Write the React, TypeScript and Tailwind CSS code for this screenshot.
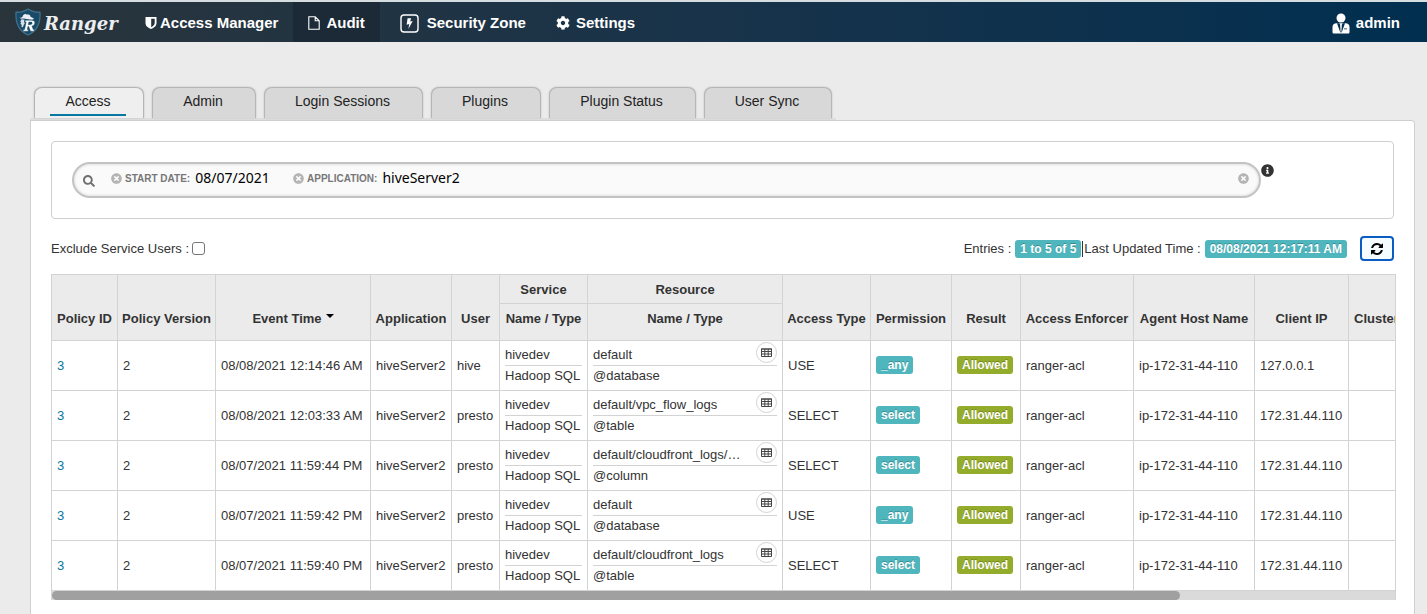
import { FaCog, FaInfoCircle, FaSearch, FaTimesCircle } from "react-icons/fa";

const tabs = [
  { label: "Access", width: "w-[110px]", active: true },
  { label: "Admin", width: "w-[104px]" },
  { label: "Login Sessions", width: "w-[159px]" },
  { label: "Plugins", width: "w-[110px]" },
  { label: "Plugin Status", width: "w-[147px]" },
  { label: "User Sync", width: "w-[128px]" },
];

const columnWidths = [66, 98, 155, 81, 48, 88, 195, 88, 81, 69, 113, 121, 94, 120];

const events = [
  { time: "08/08/2021 12:14:46 AM", user: "hive", resource: "default", type: "@database", access: "USE", permission: "_any", ip: "127.0.0.1" },
  { time: "08/08/2021 12:03:33 AM", user: "presto", resource: "default/vpc_flow_logs", type: "@table", access: "SELECT", permission: "select", ip: "172.31.44.110" },
  { time: "08/07/2021 11:59:44 PM", user: "presto", resource: "default/cloudfront_logs/…", type: "@column", access: "SELECT", permission: "select", ip: "172.31.44.110" },
  { time: "08/07/2021 11:59:42 PM", user: "presto", resource: "default", type: "@database", access: "USE", permission: "_any", ip: "172.31.44.110" },
  { time: "08/07/2021 11:59:40 PM", user: "presto", resource: "default/cloudfront_logs", type: "@table", access: "SELECT", permission: "select", ip: "172.31.44.110" },
];

function RangerMark() {
  return (
    <svg width="28" height="30" viewBox="0 0 28 30" aria-hidden="true">
      <path d="M14 2C10 4.800 6 5.400 2 5.200C1.400 15 4 23.500 14 28C24 23.500 26.600 15 26 5.200C22 5.400 18 4.800 14 2Z" fill="#194a68" stroke="#3f6f8c" strokeWidth="1.300" />
      <path d="M5.500 10.800c1.500.2 2.500-.3 3.200-1.300.3-1.600 1.300-2.700 2.800-2.600 1 .2 1.700.7 2.700.6 1.600.2 2.200 1.300 2.500 2.500 1.300.5 2.400.8 3.300 1.800-1 .8-2.700 1-4.200.7l-6.300-1c-1.500.3-2.900.2-4-.7z" fill="#e9eff3" />
      <path d="M7.500 12.300l3 .4-.5 2.300.9 1-1.100 2-1.100 2.500-1.400-1 .5-1.700-1.500-.7.900-1.700-.9-.8z" fill="#d5e0e7" />
      <path d="M11.300 13.300h6.200c2.600 0 3.700 1.300 3.200 3.100-.4 1.500-1.400 2.300-2.800 2.700l1.300 3.300h1.200l-.4 1.800h-3.500l-1.800-4.800h-.8l-.7 3h1.200l-.4 1.800H9.100l.4-1.800h1.100l1.600-7.300h-1.200zM14.800 15.100l-.6 2.600h1.800c1.200 0 2-.4 2.100-1.400.2-.8-.3-1.200-1.300-1.200z" fill="#fff" stroke="#194a68" strokeWidth=".4" />
    </svg>
  );
}

function ShieldIcon() {
  return (
    <svg width="12" height="14" viewBox="0 0 12 14" aria-hidden="true">
      <path d="M.5 1h11v6c0 3-2.500 4.800-5.500 6C3 11.800.5 10 .5 7z" fill="#fff" />
      <path d="M6.200 2.800h3.500V7c0 1.800-1.300 3-3.500 4.200z" fill="#22323d" />
    </svg>
  );
}

function FileIcon() {
  return (
    <svg width="12" height="14" viewBox="0 0 12 14" fill="none" stroke="#fff" strokeWidth="1.100" aria-hidden="true">
      <path d="M.8.8h6.400l4 4v8.400H.8zM7.200.8v4h4" />
    </svg>
  );
}

function BoltIcon() {
  return (
    <svg width="19" height="19" viewBox="0 0 19 19" aria-hidden="true">
      <rect x="1" y="1" width="17" height="17" rx="3" fill="none" stroke="#fff" strokeWidth="1.400" />
      <path d="M7.600 4.200h3.500L10.200 7.600l2.500-.6L8.400 15l.8-5-2.600.7z" fill="#fff" />
    </svg>
  );
}

function AdminIcon() {
  return (
    <svg width="18" height="21" viewBox="0 0 18 21" aria-hidden="true">
      <circle cx="9" cy="5" r="4.500" fill="#fff" />
      <path d="M4.500 10.200h9c2.500 0 4 1.500 4 4V19c0 1-.6 1.500-1.500 1.500H2C1 20.500.5 20 .5 19v-4.800c0-2.500 1.500-4 4-4z" fill="#fff" />
      <path d="M5 10.200 8.300 19.500h.4l-.5-6.500 0-1.300-.9-1.500zM13 10.200 9.700 19.500h-.4l.5-6.500 0-1.300.9-1.500zM12 15.500h3v.8h-3z" fill="#05304f" />
    </svg>
  );
}

function RefreshIcon() {
  return (
    <svg width="12" height="12" viewBox="0 0 1536 1536" fill="#000" aria-hidden="true">
      <path d="M1511 928q0 5-1 7-64 268-268 434.500T764 1536q-146 0-282.500-55T238 1324l-129 129q-19 19-45 19t-45-19-19-45V960q0-26 19-45t45-19h448q26 0 45 19t19 45-19 45l-137 137q71 66 161 102t187 36q134 0 250-65t186-179q11-17 53-117 8-23 30-23h192q13 0 22.500 9.500t9.500 22.500zm25-800v448q0 26-19 45t-45 19h-448q-26 0-45-19t-19-45 19-45l138-138Q969 256 768 256q-134 0-250 65T332 500q-11 17-53 117-8 23-30 23H50q-13 0-22.500-9.500T18 608v-7q65-268 270-434.500T768 0q146 0 284 55.500T1297 212l130-129q19-19 45-19t45 19 19 45z" />
    </svg>
  );
}

function GridIcon() {
  return (
    <svg width="11" height="9" viewBox="0 0 11 9" fill="none" stroke="#444" strokeWidth="1" aria-hidden="true">
      <path d="M.5 1h10v7.500H.5zM0 1h11M.5 3.500h10M.5 6h10M3.800 1v7.500M7.200 1v7.500" />
    </svg>
  );
}

const badge = "inline-block rounded-[3px] px-[5px] text-[12px] leading-[18px] font-bold text-white [text-shadow:0_-1px_0_rgba(0,0,0,0.25)]";
const head = "border-r border-b border-[#d3d3d3] px-1 pb-[11px] text-center align-bottom font-bold";
const groupHead = "border-r border-b border-[#d3d3d3] px-0 pt-0.5 pb-0";
const cell = "h-[50px] border-r border-b border-[#d3d3d3] px-[5px] align-middle";
const badgeCell = "h-[50px] border-r border-b border-[#d3d3d3] px-[5px] pb-0.5 align-middle";

export default function App() {
  return (
    <div className="flex min-h-screen flex-col bg-[#ebebeb] font-['Liberation_Sans',Arial,sans-serif] text-[13px] leading-5 text-[#333]">
      <header className="flex h-[42px] items-stretch border-t-2 border-[#d5dde1] bg-linear-to-r from-[#29343b] via-[#18334a] to-[#012f50] text-[15px] font-bold text-white">
        <a href="#home" className="flex w-[130px] items-center gap-0.5 pl-3.5 text-[#eceff1]">
          <RangerMark />
          <span className="pt-1 font-['DejaVu_Serif',serif] text-[18px] leading-6 italic">Ranger</span>
        </a>
        <nav className="flex items-stretch">
          <a href="#access-manager" className="flex items-center gap-[3px] px-[15px] pt-0.5"><ShieldIcon />Access Manager</a>
          <a href="#audit" className="flex items-center gap-1.5 bg-[#1b2a36] px-[15px] pt-0.5"><FileIcon />Audit</a>
          <a href="#security-zone" className="flex items-center gap-2 pr-[15px] pl-5 pt-0.5"><BoltIcon />Security Zone</a>
          <a href="#settings" className="flex items-center gap-1.5 px-[15px] pt-0.5"><FaCog size={14} />Settings</a>
        </nav>
        <a href="#profile" className="ml-auto flex items-center gap-1.5 pt-0.5 pr-[27px]"><AdminIcon />admin</a>
      </header>

      <main className="flex flex-1 flex-col pt-[45px] pr-3 pl-[30px]">
        <nav className="flex w-[806px] gap-2 border-b-2 border-[#dedede] pl-1">
          {tabs.map((tab) => (
            <a
              key={tab.label}
              href={"#" + tab.label}
              className={`flex h-[31px] justify-center rounded-t-lg border border-b-0 border-[#b5b5b5] pt-[3px] text-[14px] text-[#222] shadow-[0_0_2px_#bbb] ${tab.width} ${tab.active ? "bg-[#efefef]" : "bg-[#d8d8d8]"}`}
            >
              <span className={tab.active ? "mr-0.5 h-[25px] w-[76px] border-b-2 border-[#0878a4] text-center" : "pr-0.5"}>{tab.label}</span>
            </a>
          ))}
        </nav>

        <section className="flex-1 rounded-tr border border-b-0 border-[#cfcfcf] bg-white px-5 pt-5">
          <div className="flex items-start rounded-sm border border-[#cfcfcf] px-5 py-5">
            <div className="flex h-9 w-[1189px] items-center rounded-[18px] border-2 border-[#c3c3c3] bg-[#fafafa] pr-2.5 pl-[9px] shadow-[inset_0_0_3px_#ccc]">
              <FaSearch size={12} className="mt-0.5 shrink-0 text-[#707070]" />
              <div className="flex min-w-0 flex-1 items-center pb-1 pl-4">
                {[
                  { name: "START DATE:", value: "08/07/2021" },
                  { name: "APPLICATION:", value: "hiveServer2" },
                ].map((facet) => (
                  <div key={facet.name} className="flex min-w-[182px] items-center">
                    <button aria-label={"Remove " + facet.name} className="text-[#b4b4b4]"><FaTimesCircle size={11} /></button>
                    <span className="pt-px pl-[3px] text-[10px] font-bold text-[#777]">{facet.name}</span>
                    <span className="pl-[5px] font-['Noto_Sans',sans-serif] text-[14px] text-black">{facet.value}</span>
                  </div>
                ))}
                <input aria-label="Search access events" className="min-w-0 flex-1 bg-transparent outline-none" />
              </div>
              <button aria-label="Clear search" className="pb-1 text-[#b4b4b4]"><FaTimesCircle size={11} /></button>
            </div>
            <button aria-label="Search help" className="pt-0.5 text-[#333]"><FaInfoCircle size={13} /></button>
          </div>

          <div className="flex h-[55px] items-center justify-between pt-1">
            <label className="flex items-center gap-[3px]">
              Exclude Service Users :
              <input type="checkbox" className="size-[13px] appearance-none rounded-[3px] border border-[#767676] bg-white" />
            </label>
            <div className="flex items-center">
              <span className="pr-1">Entries :</span>
              <span className={badge + " bg-[#4fb6be]"}>1 to 5 of 5</span>
              <span className="ml-px border-l border-[#333] pr-1 pl-px leading-4">Last Updated Time :</span>
              <span className={badge + " bg-[#4fb6be]"}>08/08/2021 12:17:11 AM</span>
              <button aria-label="Refresh" className="ml-[13px] flex h-[25px] w-[34px] items-center justify-center rounded border-2 border-[#0b5cc0] bg-[#f5fcff]"><RefreshIcon /></button>
            </div>
          </div>

          <div className="-mr-0.5 overflow-hidden border border-b-0 border-[#d3d3d3]">
            <div className="overflow-hidden">
              <table className="w-[1417px] table-fixed border-separate border-spacing-0 whitespace-nowrap">
                <colgroup>
                  {columnWidths.map((width, i) => <col key={i} style={{ width }} />)}
                </colgroup>
                <thead className="bg-[#ebebeb]">
                  <tr className="h-[29px]">
                    <th rowSpan={2} className={head}>Policy ID</th>
                    <th rowSpan={2} className={head}>Policy Version</th>
                    <th rowSpan={2} className={head}>
                      <button className="font-bold">Event Time<svg width="8" height="10" viewBox="0 0 8 10" className="ml-1 inline-block align-baseline" aria-hidden="true"><path d="M0 1h8L4 5z" /></svg></button>
                    </th>
                    <th rowSpan={2} className={head}>Application</th>
                    <th rowSpan={2} className={head}>User</th>
                    <th className={groupHead}>Service</th>
                    <th className={groupHead}>Resource</th>
                    <th rowSpan={2} className={head}>Access Type</th>
                    <th rowSpan={2} className={head}>Permission</th>
                    <th rowSpan={2} className={head}>Result</th>
                    <th rowSpan={2} className={head}>Access Enforcer</th>
                    <th rowSpan={2} className={head}>Agent Host Name</th>
                    <th rowSpan={2} className={head}>Client IP</th>
                    <th rowSpan={2} className="border-r border-b border-[#d3d3d3] px-[5px] pb-[11px] text-left align-bottom font-bold">Cluster Name</th>
                  </tr>
                  <tr className="h-[37px]">
                    <th className={head}>Name / Type</th>
                    <th className={head}>Name / Type</th>
                  </tr>
                </thead>
                <tbody>
                  {events.map((event) => (
                    <tr key={event.time}>
                      <td className={cell}><a href="#policy" className="text-[#0878a4]">3</a></td>
                      <td className={cell}>2</td>
                      <td className={cell}>{event.time}</td>
                      <td className={cell}>hiveServer2</td>
                      <td className={cell}>{event.user}</td>
                      <td className={cell}>
                        <div className="border-b border-[#d3d3d3]">hivedev</div>
                        <div>Hadoop SQL</div>
                      </td>
                      <td className={cell}>
                        <div className="flex h-[21px] items-center justify-between border-b border-[#d3d3d3]">
                          <span>{event.resource}</span>
                          <button aria-label="Show query" className="-mt-1.5 flex size-[21px] shrink-0 items-center justify-center rounded-full border border-[#d3d3d3] bg-white"><GridIcon /></button>
                        </div>
                        <div>{event.type}</div>
                      </td>
                      <td className={cell}>{event.access}</td>
                      <td className={badgeCell}><span className={badge + " bg-[#4fb6be]"}>{event.permission}</span></td>
                      <td className={badgeCell}><span className={badge + " bg-[#94ac2c]"}>Allowed</span></td>
                      <td className={cell}>ranger-acl</td>
                      <td className={cell}>ip-172-31-44-110</td>
                      <td className={cell}>{event.ip}</td>
                      <td className={cell} />
                    </tr>
                  ))}
                </tbody>
              </table>
            </div>
            <div className="h-[9px] bg-[#dadada]"><div className="h-full w-[84%] rounded-full bg-[#a0a0a0]" /></div>
          </div>
        </section>
      </main>
    </div>
  );
}
